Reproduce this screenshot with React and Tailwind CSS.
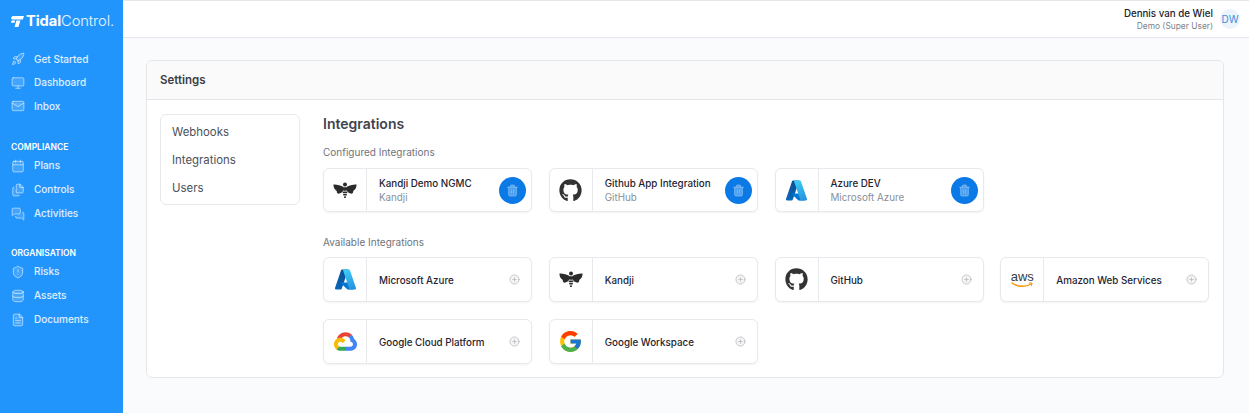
import React from "react";
import { Rocket, Monitor, Mail, Calendar, Files, MessagesSquare, ShieldAlert, Database, FileText, Trash2, CirclePlus } from "lucide-react";
import { FaGithub } from "react-icons/fa";
import { FcGoogle } from "react-icons/fc";

const Bee = () => (
  <svg width="24" height="17" viewBox="0 0 24 17" fill="#2b2b2b">
    <path d="M10.6 5 C7.6 3.4 4 2.4 .4 2.6 C.5 5.4 1.6 8 3.8 9 C3.4 10.6 4.6 12 6.2 11.6 C8.4 11 10 9.4 10.6 7.4 Z" />
    <path d="M13.4 5 C16.4 3.4 20 2.4 23.6 2.6 C23.5 5.4 22.4 8 20.2 9 C20.6 10.6 19.4 12 17.8 11.6 C15.6 11 14 9.4 13.4 7.4 Z" />
    <circle cx="12" cy="2.4" r="2" />
    <rect x="10" y="5.2" width="4" height="3.6" rx="1" />
    <rect x="9.6" y="9.6" width="4.8" height="1.7" rx=".8" />
    <rect x="10" y="12" width="4" height="1.6" rx=".8" />
    <rect x="11" y="14.3" width="2" height="1.8" rx=".9" />
  </svg>
);

const Azure = () => (
  <svg width="23" height="23" viewBox="0 0 96 96">
    <defs>
      <linearGradient id="az1" x1="60.9" y1="6.7" x2="8" y2="91" gradientUnits="userSpaceOnUse"><stop stopColor="#114a8b" /><stop offset="1" stopColor="#0669bc" /></linearGradient>
      <linearGradient id="az2" x1="46" y1="12" x2="75" y2="88" gradientUnits="userSpaceOnUse"><stop stopColor="#3ccbf4" /><stop offset="1" stopColor="#2892df" /></linearGradient>
    </defs>
    <path fill="url(#az1)" d="M33.34 6.54h26.04l-27.03 80.1a4.15 4.15 0 0 1-3.94 2.81H8.15a4.14 4.14 0 0 1-3.93-5.47L29.4 9.38a4.15 4.15 0 0 1 3.94-2.83z" />
    <path fill="#0078d4" d="M71.17 60.26H29.88a1.91 1.91 0 0 0-1.3 3.31l26.53 24.76a4.17 4.17 0 0 0 2.85 1.13h23.38z" />
    <path fill="url(#az2)" d="M66.6 9.36a4.14 4.14 0 0 0-3.93-2.82H33.65a4.15 4.15 0 0 1 3.93 2.82l25.18 74.62a4.15 4.15 0 0 1-3.93 5.48h29.02a4.15 4.15 0 0 0 3.93-5.48z" />
  </svg>
);

const GCloud = () => (
  <svg width="23" height="19" viewBox="0 0 256 206">
    <path fill="#EA4335" d="M170.2517,56.8186 L192.5047,34.5656 L193.9877,25.1956 C153.4367,-11.6774 88.9757,-7.4964 52.4207,33.9196 C42.2667,45.4226 34.7337,59.7636 30.7167,74.5726 L38.6867,73.4496 L83.2917,66.0926 L86.7357,62.5706 C106.5767,40.7806 140.1257,37.8486 163.0347,56.3896 L170.2517,56.8186 Z" />
    <path fill="#4285F4" d="M224.2048,73.9182 C219.0778,55.0382 208.5528,38.0652 193.9877,25.1956 L162.6877,56.4956 C175.9047,67.2956 183.4347,83.5656 183.1117,100.6286 L183.1117,106.1846 C198.4967,106.1846 210.9697,118.6566 210.9697,134.0416 C210.9697,149.4276 198.4967,161.5866 183.1117,161.5866 L127.3197,161.5866 L121.8417,167.5336 L121.8417,200.9476 L127.3197,206.1906 L183.1117,206.1906 C223.1277,206.5026 255.8207,174.6276 256.1327,134.6116 C256.3217,110.3556 244.3627,87.6166 224.2048,73.9182" />
    <path fill="#34A853" d="M71.6074,206.1906 L127.3194,206.1906 L127.3194,161.5866 L71.6074,161.5866 C67.6384,161.5856 63.7934,160.7326 60.1844,159.0836 L52.2824,161.5066 L29.8274,183.8066 L27.8714,191.3966 C40.4634,200.9036 55.8264,206.2586 71.6074,206.1906" />
    <path fill="#FBBC05" d="M71.6074,61.4016 C31.5894,61.6406 -0.6566,94.2746 -0.4176,134.2926 C-0.2836,156.6386 10.1526,177.6776 27.8714,191.3966 L60.1864,159.0816 C46.1664,152.7476 39.9354,136.2476 46.2694,122.2286 C52.6034,108.2096 69.1034,101.9776 83.1214,108.3116 C89.2984,111.1026 94.2454,116.0496 97.0364,122.2286 L129.3524,89.9136 C115.5974,71.9326 94.2464,61.4206 71.6074,61.4016" />
  </svg>
);

const Aws = () => (
  <div className="flex flex-col items-center leading-none">
    <span className="text-[13px] leading-[10px] text-[#333e48] font-['Liberation_Sans',sans-serif]">aws</span>
    <svg width="22" height="6" viewBox="0 0 22 6" fill="none">
      <path d="M1 1 C6 5 15 5.4 20 2" stroke="#f79400" strokeWidth="1.4" strokeLinecap="round" />
      <path d="M18 1 L21 1 L20.4 4" stroke="#f79400" strokeWidth="1" fill="none" />
    </svg>
  </div>
);

const Github = () => <FaGithub className="text-[23px] text-[#333333]" />;
const Google = () => <FcGoogle className="text-[25px]" />;

const NavItem = ({ icon: Icon, label, compact }) => (
  <div className={`flex items-center pl-[11px] ${compact ? "h-[23.5px]" : "h-6"}`}>
    <Icon size={14} strokeWidth={1.4} fill="rgba(255,255,255,0.14)" className="text-white/65 w-[14px] mr-[9px]" />
    <span className="text-[10px] font-medium text-white/85">{label}</span>
  </div>
);

const Section = ({ title, children }) => (
  <div>
    <div className="pl-[11px] h-[13px] text-[8.5px] leading-[12px] font-semibold text-white">{title}</div>
    <div>{children}</div>
  </div>
);

const Card = ({ logo, title, sub, configured }) => (
  <div className={`w-[209px] flex items-stretch bg-white border border-[#e8e9ec] rounded-[6px] shadow-[0_1px_2px_rgba(0,0,0,0.05)] ${configured ? "h-[44px]" : "h-[45px]"}`}>
    <div className="w-[43px] shrink-0 flex items-center justify-center border-r border-[#e8e9ec]">{logo}</div>
    <div className="flex-1 min-w-0 pl-3 pt-[2px] flex flex-col justify-center">
      <div className="text-[9.8px] leading-[14px] font-medium text-[#1f2430]">{title}</div>
      {sub && <div className="text-[9.8px] leading-[14px] text-[#8a8f98]">{sub}</div>}
    </div>
    {configured ? (
      <div className="self-center mr-[5px] w-[27px] h-[27px] rounded-full bg-[#0b7ae6] flex items-center justify-center">
        <Trash2 size={13} strokeWidth={1.6} fill="rgba(127,189,245,0.55)" className="text-[#7fbdf5]" />
      </div>
    ) : (
      <div className="self-center mr-[11px]">
        <CirclePlus size={11} strokeWidth={1.4} fill="#f4f4f5" className="text-[#adb0b6]" />
      </div>
    )}
  </div>
);

export default function App() {
  return (
    <div className="flex h-[413px] w-[1249px] overflow-hidden bg-[#f9fbfd] font-['Inter',sans-serif]">
      <aside className="w-[123px] shrink-0 bg-[#2295fd] flex flex-col">
        <div className="h-[47.5px] pt-[12px] pl-[11px] flex items-start">
          <div className="flex items-center h-[18px]">
            <svg width="13" height="11" viewBox="0 0 13 11" fill="white" className="mr-[2px]">
              <path d="M2 0 H13 L11.8 3.4 H1.4 C0.4 3.4 0 2.8 0.3 1.8 C0.6 0.7 1 0 2 0 Z" />
              <path d="M0.6 4.6 H4.2 L3.5 6.8 H0 Z" />
              <path d="M5.4 4.6 H9.4 L7.4 11 H3.6 Z" />
            </svg>
            <span className="text-[14.7px] leading-[18px] tracking-[-0.1px] text-white font-bold">Tidal</span>
            <span className="text-[14.7px] leading-[18px] tracking-[-0.1px] text-white/90 font-light">Control.</span>
          </div>
        </div>
        <div>
          <NavItem compact icon={Rocket} label="Get Started" />
          <NavItem compact icon={Monitor} label="Dashboard" />
          <NavItem compact icon={Mail} label="Inbox" />
        </div>
        <div className="mt-[22.5px]">
          <Section title="COMPLIANCE">
            <NavItem icon={Calendar} label="Plans" />
            <NavItem icon={Files} label="Controls" />
            <NavItem icon={MessagesSquare} label="Activities" />
          </Section>
        </div>
        <div className="mt-[21px]">
          <Section title="ORGANISATION">
            <NavItem icon={ShieldAlert} label="Risks" />
            <NavItem icon={Database} label="Assets" />
            <NavItem icon={FileText} label="Documents" />
          </Section>
        </div>
      </aside>
      <div className="flex-1 min-w-0 flex flex-col">
        <header className="h-[38px] shrink-0 bg-white border-t border-b border-[#e4e6ea] flex items-center justify-end pr-[9px]">
          <div className="text-right mr-[7px]">
            <div className="text-[9.75px] leading-[13px] font-medium text-[#20242c]">Dennis van de Wiel</div>
            <div className="text-[8.4px] leading-[12px] text-[#7d828b]">Demo (Super User)</div>
          </div>
          <div className="w-[20px] h-[20px] rounded-full bg-[#edf3fa] text-[#3b8fe0] text-[10px] flex items-center justify-center">DW</div>
        </header>
        <main className="pt-[22px] pl-[23px] pr-[25px]">
          <section className="h-[318px] bg-white border border-[#e4e6ea] rounded-[6px] overflow-hidden">
            <div className="h-[39px] bg-[#fafafa] border-b border-[#e4e6ea] flex items-center pl-[13px] pt-[1px]">
              <h1 className="text-[11.5px] font-semibold text-[#3a3f47]">Settings</h1>
            </div>
            <div className="flex pt-[14px] pl-[13px]">
              <nav className="w-[140px] h-[91px] shrink-0 border border-[#e8e9ec] rounded-[6px] pt-[3px] pl-[11px] text-[11.4px] text-[#4b5059]">
                <div className="h-[28px] leading-[28px]">Webhooks</div>
                <div className="h-[28px] leading-[28px]">Integrations</div>
                <div className="h-[28px] leading-[28px]">Users</div>
              </nav>
              <div className="ml-[23px]">
                <h2 className="text-[14px] leading-[20px] font-semibold text-[#3f444c]">Integrations</h2>
                <div className="mt-[11px] text-[10px] leading-[14px] text-[#6f747c]">Configured Integrations</div>
                <div className="mt-[9px] flex gap-x-[16.75px]">
                  <Card configured logo={<Bee />} title="Kandji Demo NGMC" sub="Kandji" />
                  <Card configured logo={<Github />} title="Github App Integration" sub="GitHub" />
                  <Card configured logo={<Azure />} title="Azure DEV" sub="Microsoft Azure" />
                </div>
                <div className="mt-[23px] text-[10px] leading-[14px] text-[#6f747c]">Available Integrations</div>
                <div className="mt-[8px] grid grid-cols-[209px_209px_209px_209px] gap-x-[16.75px] gap-y-[17px]">
                  <Card logo={<Azure />} title="Microsoft Azure" />
                  <Card logo={<Bee />} title="Kandji" />
                  <Card logo={<Github />} title="GitHub" />
                  <Card logo={<Aws />} title="Amazon Web Services" />
                  <Card logo={<GCloud />} title="Google Cloud Platform" />
                  <Card logo={<Google />} title="Google Workspace" />
                </div>
              </div>
            </div>
          </section>
        </main>
      </div>
    </div>
  );
}
